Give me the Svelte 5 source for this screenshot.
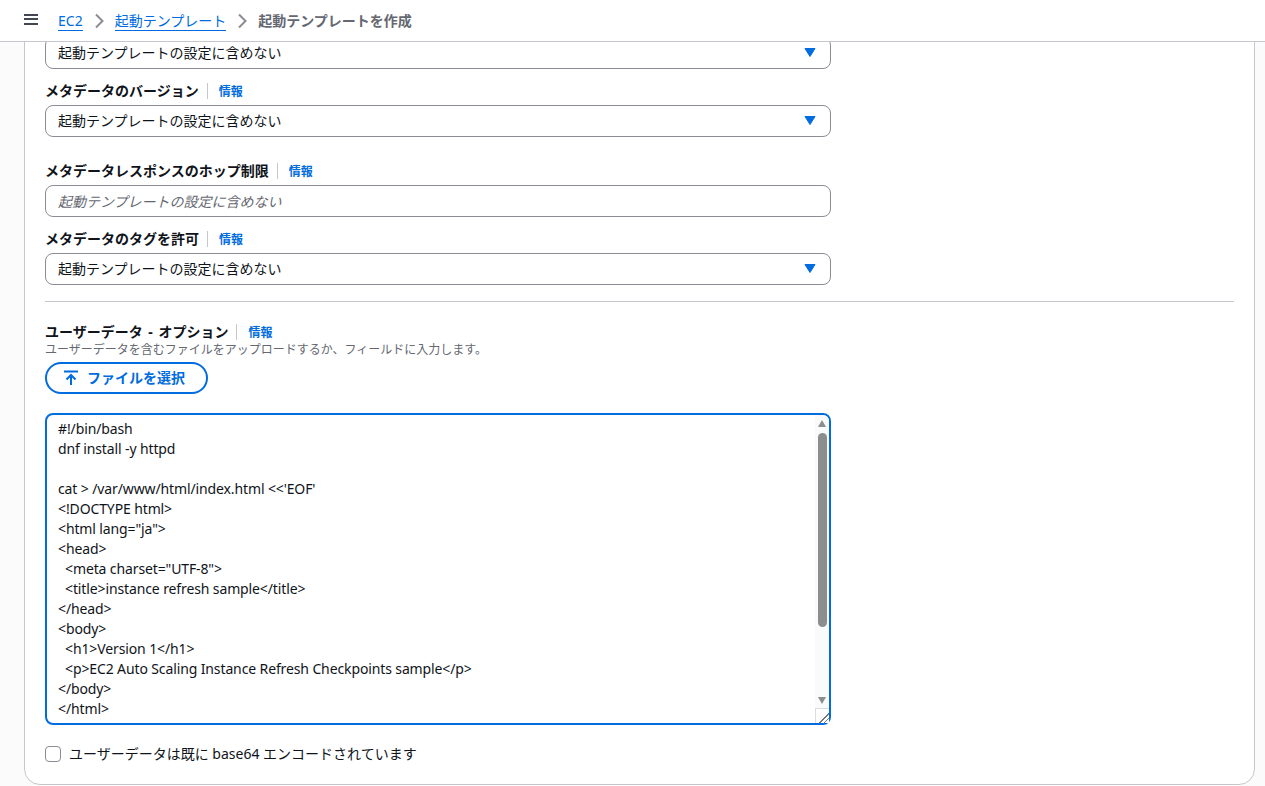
<script>
	const notIncluded = '起動テンプレートの設定に含めない';
</script>

{#snippet caret()}
	<svg class="caret" width="16" height="16" viewBox="0 0 16 16" aria-hidden="true">
		<path d="M3 3.5h10L8 11.5z" fill="#006ce0" stroke="#006ce0" stroke-width="1" stroke-linejoin="round" />
	</svg>
{/snippet}

{#snippet fieldLabel(text)}
	<div class="label-row">
		<span class="label">{text}</span>
		<a class="info" href="#info">情報</a>
	</div>
{/snippet}

<header class="topbar">
	<button class="menu" aria-label="メニュー">
		<span></span><span></span><span></span>
	</button>
	<nav class="crumbs">
		<a href="#ec2">EC2</a>
		<svg class="chevron" width="16" height="16" viewBox="0 0 16 16" aria-hidden="true">
			<path d="M5 1.5l6.5 6.5L5 14.5" fill="none" stroke="#8c8c94" stroke-width="2" />
		</svg>
		<a href="#templates">起動テンプレート</a>
		<svg class="chevron" width="16" height="16" viewBox="0 0 16 16" aria-hidden="true">
			<path d="M5 1.5l6.5 6.5L5 14.5" fill="none" stroke="#8c8c94" stroke-width="2" />
		</svg>
		<span class="current">起動テンプレートを作成</span>
	</nav>
</header>

<main class="page">
	<section class="card">
		<button class="select">{notIncluded}{@render caret()}</button>

		<div class="field">
			{@render fieldLabel('メタデータのバージョン')}
			<button class="select">{notIncluded}{@render caret()}</button>
		</div>

		<div class="field wide-gap">
			{@render fieldLabel('メタデータレスポンスのホップ制限')}
			<input class="text-input" placeholder={notIncluded} />
		</div>

		<div class="field">
			{@render fieldLabel('メタデータのタグを許可')}
			<button class="select">{notIncluded}{@render caret()}</button>
		</div>

		<hr class="divider" />

		{@render fieldLabel('ユーザーデータ - オプション')}
		<p class="desc">ユーザーデータを含むファイルをアップロードするか、フィールドに入力します。</p>
		<button class="upload">
			<svg width="16" height="16" viewBox="0 0 16 16" aria-hidden="true">
				<path d="M1 1.5h14M8 15V5M3.5 9.5L8 5l4.5 4.5" fill="none" stroke="#006ce0" stroke-width="2" />
			</svg>
			ファイルを選択
		</button>

		<div class="editor">
			<textarea spellcheck="false">#!/bin/bash
dnf install -y httpd

cat > /var/www/html/index.html &lt;&lt;'EOF'
&lt;!DOCTYPE html&gt;
&lt;html lang="ja"&gt;
&lt;head&gt;
  &lt;meta charset="UTF-8"&gt;
  &lt;title&gt;instance refresh sample&lt;/title&gt;
&lt;/head&gt;
&lt;body&gt;
  &lt;h1&gt;Version 1&lt;/h1&gt;
  &lt;p&gt;EC2 Auto Scaling Instance Refresh Checkpoints sample&lt;/p&gt;
&lt;/body&gt;
&lt;/html&gt;
EOF</textarea>
			<div class="scrollbar">
				<span class="arrow up"></span>
				<span class="thumb"></span>
				<span class="arrow down"></span>
				<span class="resizer"></span>
			</div>
		</div>

		<label class="check">
			<input type="checkbox" />
			<span>ユーザーデータは既に base64 エンコードされています</span>
		</label>
	</section>
</main>

<style>
	:global(body) {
		background: #fbfbfb;
		font-family: "Noto Sans", "Noto Sans CJK JP", sans-serif;
		font-size: 14px;
		color: #0f141a;
		overflow: hidden;
	}

	.topbar {
		position: relative;
		z-index: 2;
		display: flex;
		align-items: center;
		height: 41px;
		padding-left: 24px;
		gap: 20px;
		background: #fff;
		border-bottom: 1px solid #c6c6cd;
	}

	.menu {
		display: flex;
		flex-direction: column;
		gap: 2.5px;
		width: 14px;
		padding: 0;
		margin-top: -3px;
		border: 0;
		background: none;
	}

	.menu span {
		height: 2px;
		background: #424650;
	}

	.crumbs {
		display: flex;
		align-items: center;
		gap: 8px;
		font-size: 14px;
		line-height: 20px;
	}

	.crumbs a {
		color: #006ce0;
		text-decoration: none;
		border-bottom: 1px solid #006ce0;
		line-height: 19px;
	}

	.current {
		font-weight: 700;
		color: #656871;
	}

	.chevron {
		display: block;
	}

	.page {
		margin: 0 10px 0 24px;
	}

	.card {
		margin-top: -41px;
		padding: 35px 20px 20px;
		background: #fff;
		border: 1px solid #c6c6cd;
		border-radius: 16px;
	}

	.select,
	.text-input {
		display: flex;
		align-items: center;
		justify-content: space-between;
		box-sizing: border-box;
		width: 786px;
		height: 32px;
		padding: 0 12px;
		background: #fff;
		border: 1px solid #8c8c94;
		border-radius: 8px;
		font: inherit;
		color: inherit;
		text-align: left;
	}

	.select {
		padding-bottom: 2px;
	}

	.caret {
		margin-top: 2px;
	}

	.text-input::placeholder {
		color: #656871;
		font-style: italic;
		opacity: 1;
	}

	.field {
		margin-top: 12px;
	}

	.wide-gap {
		margin-top: 24px;
	}

	.label-row {
		display: flex;
		align-items: center;
		height: 20px;
		margin-bottom: 4px;
	}

	.label {
		margin-bottom: 2px;
		font-weight: 700;
		word-spacing: 2px;
	}

	.info {
		display: block;
		height: 16px;
		margin-left: 8px;
		padding-left: 11px;
		border-left: 1px solid #c6c6cd;
		color: #006ce0;
		font-size: 12px;
		font-weight: 700;
		line-height: 18px;
		text-decoration: none;
	}

	.divider {
		margin: 16px 0 20px;
		border: 0;
		border-top: 1px solid #c6c6cd;
	}

	.desc {
		margin: -4px 0 4px;
		font-size: 12px;
		line-height: 16px;
		color: #656871;
	}

	.upload {
		display: flex;
		align-items: center;
		gap: 8px;
		box-sizing: border-box;
		height: 32px;
		padding: 0 21px 2px 16px;
		background: #fff;
		border: 2px solid #006ce0;
		border-radius: 20px;
		color: #006ce0;
		font: inherit;
		font-weight: 700;
	}

	.upload svg {
		margin-top: 2px;
	}

	.editor {
		position: relative;
		width: 786px;
		height: 312px;
		margin-top: 19px;
	}

	textarea {
		display: block;
		box-sizing: border-box;
		width: 100%;
		height: 100%;
		padding: 4px 11px;
		border: 2px solid #006ce0;
		border-radius: 8px;
		outline: 0;
		overflow: hidden;
		resize: none;
		font: inherit;
		line-height: 20px;
		letter-spacing: -0.12px;
		color: inherit;
	}

	.scrollbar {
		position: absolute;
		top: 2px;
		right: 2px;
		bottom: 2px;
		width: 14px;
		background: #fafafa;
		border-radius: 0 6px 6px 0;
	}

	.thumb {
		position: absolute;
		top: 18px;
		left: 3px;
		width: 9px;
		height: 194px;
		background: #8d8d8d;
		border-radius: 5px;
	}

	.arrow {
		position: absolute;
		left: 3px;
		width: 0;
		height: 0;
		border-left: 4.5px solid transparent;
		border-right: 4.5px solid transparent;
	}

	.arrow.up {
		top: 5px;
		border-bottom: 7px solid #8d8d8d;
	}

	.arrow.down {
		bottom: 19px;
		border-top: 7px solid #8d8d8d;
	}

	.resizer {
		position: absolute;
		right: 0;
		bottom: 0;
		box-sizing: border-box;
		width: 14px;
		height: 15px;
		background:
			linear-gradient(135deg, transparent 62%, #777 62%, #777 68%, transparent 68%, transparent 78%, #777 78%, #777 84%, transparent 84%),
			#fff;
		border-top: 1px solid #dcdcdc;
		border-left: 1px solid #dcdcdc;
	}

	.check {
		display: flex;
		align-items: center;
		gap: 8px;
		height: 20px;
		margin-top: 19px;
		line-height: 20px;
	}

	.check input {
		appearance: none;
		box-sizing: border-box;
		width: 16px;
		height: 16px;
		margin: 0;
		background: #fff;
		border: 1px solid #8c8c94;
		border-radius: 4px;
	}
</style>
